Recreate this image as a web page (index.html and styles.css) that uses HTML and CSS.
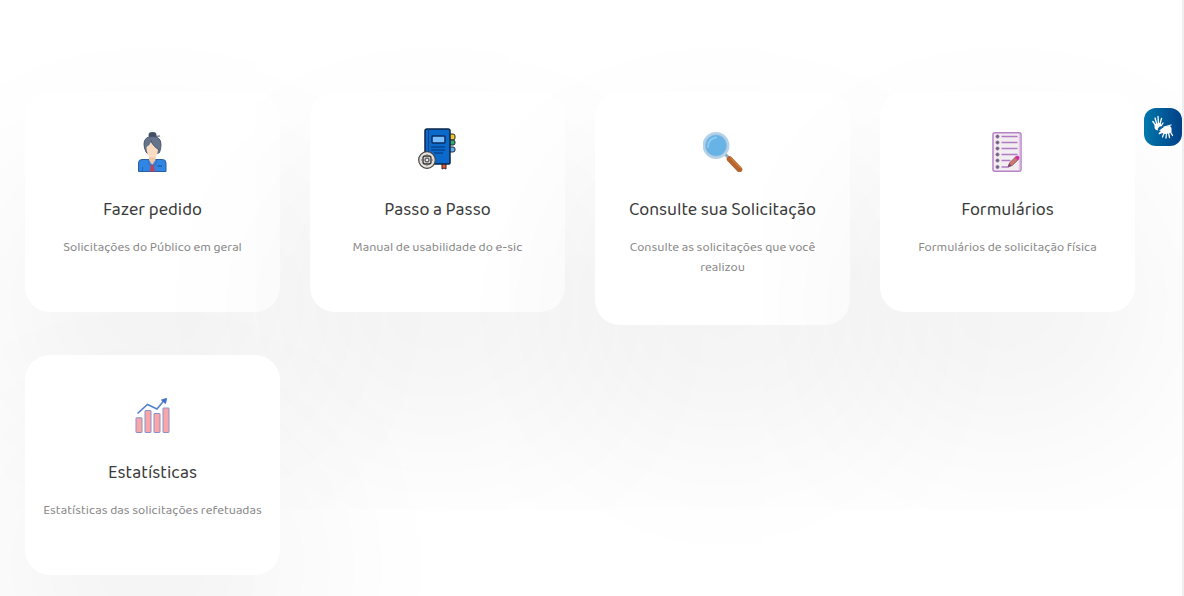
FILE: index.html
```
<!DOCTYPE html>
<html lang="pt-br">

<head>
    <meta charset="UTF-8">
    <meta name="viewport" content="width=device-width, initial-scale=1.0">
    <title>e-SIC</title>
    <link rel="stylesheet" href="styles.css">
</head>

<body>
    <main class="services">
        <a class="card" href="#">
            <svg class="icon" viewBox="0 0 40 40" aria-hidden="true">
                <path d="M5.500 39.500V31q0-3.500 3.500-3.500h20.500q3.500 0 3.500 3.500v8.500z" fill="#2f86e4" stroke="#2b5f9f" stroke-width="1" />
                <path d="M16 22h6.500v6l-3.300 5-3.200-5z" fill="#f0c8a8" />
                <path d="M18 32.500h2.500l1.500 7h-5.500z" fill="#b8455c" />
                <path d="M15 28l1 5 2 1M23.500 28l-1 5-2 1" fill="none" stroke="#3c6fb4" />
                <path d="M24.500 34h4.500" stroke="#1d4a86" stroke-width="1" />
                <path d="M9.500 39v-4" stroke="#1d5fb4" stroke-width=".8" />
                <ellipse cx="19.500" cy="3" rx="4" ry="3" fill="#414e63" />
                <path d="M20 4.500l7-.5" stroke="#414e63" stroke-width="1.200" />
                <path d="M13 20q-2-4-2-8 0-7.500 8.500-7.500t8.500 8q0 4-1.500 8l-2 1h-10z" fill="#66748b" stroke="#445066" stroke-width=".9" />
                <path d="M13.500 15q3.500-2 4.500-5 3 5 7 7.500-.5 8-5.800 8.500-5.700-1-5.700-11z" fill="#fbdcc2" />
                <path d="M18 8q1 6 8.500 10" fill="none" stroke="#445066" stroke-width=".8" />
            </svg>
            <h2 class="card-title">Fazer pedido</h2>
            <p class="card-text">Solicitações do Público em geral</p>
        </a>

        <a class="card" href="#">
            <svg class="icon icon-manual" viewBox="0 0 40 44" aria-hidden="true">
                <path d="M31 6h4q2 0 2 2v2q0 2-2 2h-4z" fill="#f5c52c" stroke="#262a33" />
                <path d="M31 12h4q2 0 2 2v1q0 2-2 2h-4z" fill="#2eac70" stroke="#262a33" />
                <path d="M31 19h4q2 0 2 2v1q0 2-2 2h-4z" fill="#61aef0" stroke="#262a33" />
                <path d="M24 35h4v6l-2-1-2 1z" fill="#e95d35" stroke="#3a2526" />
                <path d="M9 1h21q2 0 2 2v32q0 1-1 1H7V3q0-2 2-2z" fill="#0b69cc" stroke="#0a2446" stroke-width="1.500" />
                <path d="M10.500 1v34" stroke="#084389" />
                <rect x="14" y="8" width="13" height="7" rx="1" fill="#78bdff" stroke="#082c60" stroke-width="1.500" />
                <path d="M13 19h14M13 22h14M16 25h9" stroke="#07356f" stroke-width="1.200" />
                <circle cx="9" cy="32" r="8.300" fill="#e5dfd9" stroke="#444" stroke-width="1.200" />
                <rect x="5" y="28" width="8" height="8" rx="2" fill="#ccc" stroke="#353535" stroke-width="1.300" />
                <path d="M9 26v3M9 35v3M3 32h3M12 32h3" stroke="#666" />
                <circle cx="9" cy="32" r="2" fill="#eee" stroke="#333" />
            </svg>
            <h2 class="card-title">Passo a Passo</h2>
            <p class="card-text">Manual de usabilidade do e-sic</p>
        </a>

        <a class="card" href="#">
            <svg class="icon" viewBox="0 0 40 40" aria-hidden="true">
                <path d="M22 22l5 5" stroke="#8eabc0" stroke-width="3" />
                <path d="M26.500 27l10 10.500" stroke="#b5652e" stroke-width="5.600" stroke-linecap="round" />
                <path d="M27.500 26l10 10" stroke="#cd7b3c" stroke-width="1.200" />
                <circle cx="13" cy="13.500" r="12" fill="#68b3e6" stroke="#b5d3e8" stroke-width="3" />
                <circle cx="13" cy="13.500" r="10.700" fill="none" stroke="#86b4d6" stroke-width=".6" />
                <path d="M5 15q0-8 8-9.500" fill="none" stroke="#8ccaf1" stroke-width="2" stroke-linecap="round" />
            </svg>
            <h2 class="card-title">Consulte sua Solicitação</h2>
            <p class="card-text">Consulte as solicitações que você realizou</p>
        </a>

        <a class="card" href="#">
            <svg class="icon" viewBox="0 0 40 40" aria-hidden="true">
                <rect x="5" y=".8" width="28" height="38.400" rx="2" fill="#f2edf1" stroke="#b681c9" stroke-width="1.500" />
                <path d="M31.500 2v36" stroke="#dfc5e6" stroke-width="1.500" />
                <path d="M13.500 4.500h16M13.500 10.500h16M13.500 16.500h16M13.500 22.500h16M13.500 28.500h9M13.500 35h7" stroke="#b07bc4" stroke-width="1.400" />
                <g fill="#6c6572" stroke="#a577b4" stroke-width=".6">
                    <circle cx="9.500" cy="4.500" r="1.700" />
                    <circle cx="9.500" cy="10.500" r="1.700" />
                    <circle cx="9.500" cy="16.500" r="1.700" />
                    <circle cx="9.500" cy="22.500" r="1.700" />
                    <circle cx="9.500" cy="28.500" r="1.700" />
                    <circle cx="9.500" cy="35" r="1.700" />
                </g>
                <path d="M20 35l1.500-4 6.500-6.500 2.700 2.700-6.500 6.300z" fill="#cf7768" stroke="#7e4b67" stroke-width=".8" />
                <path d="M27 25.500l1.500-1.500q1.500-.8 2.500.5t0 2.300l-1.500 1.400z" fill="#d42ca2" />
                <path d="M20 35l1.300-3.500 2 2z" fill="#803c70" />
            </svg>
            <h2 class="card-title">Formulários</h2>
            <p class="card-text">Formulários de solicitação física</p>
        </a>

        <a class="card" href="#">
            <svg class="icon" viewBox="0 0 40 40" aria-hidden="true">
                <g fill="#fba6a6" stroke="#8790cc" stroke-width="1">
                    <rect x="3" y="22.800" width="6" height="14.700" rx=".5" />
                    <rect x="12" y="15.500" width="6" height="22" rx=".5" />
                    <rect x="21" y="18.500" width="6" height="19" rx=".5" />
                    <rect x="30" y="13" width="6" height="24.500" rx=".5" />
                </g>
                <path d="M4.500 18.500l10-9 9.500 4.500 7-8.500" fill="none" stroke="#5580cd" stroke-width="1.600" />
                <path d="M33.500 3.500l-1 5-4-3.500z" fill="#416fc4" stroke="#416fc4" />
            </svg>
            <h2 class="card-title">Estatísticas</h2>
            <p class="card-text">Estatísticas das solicitações refetuadas</p>
        </a>
    </main>

    <button class="libras" type="button" aria-label="Libras">
        <svg class="libras-icon" viewBox="0 0 24 24" aria-hidden="true">
            <g fill="none" stroke="#fff" stroke-linecap="round" stroke-width="1.300">
                <path d="M4.500 10L1.800 6.500M5.800 9L4 3M7.500 8.500L7 1.500M9 9L10.500 3.500M10 11l2-3" />
                <path d="M13 18l-1.500 4M15.500 18l-.5 5M17.500 17.500l1 5M19 16l2.500 4.500M13 12l7-2" />
            </g>
            <path d="M3.500 9.500q3-2 6-1.500l1 2.500-2.500 1.500q-2 1.500-1 3.500-3.500-.5-3.500-3.500z" fill="#fff" />
            <path d="M10 14l4-2.500 5-.5 1.500 2v4l-3 1.500-4 .5-2-1-3.500 1.500-.5-1.200 2.500-2.500-2 .2z" fill="#fff" />
        </svg>
    </button>
</body>

</html>
```
FILE: styles.css
```
* {
    box-sizing: border-box;
}

body {
    margin: 0;
    min-height: 100vh;
    background-color: #fff;
    border-right: 2px solid #f0f0f0;
    font-family: "Baloo 2", Ubuntu, "Noto Sans", sans-serif;
    overflow-x: hidden;
}

.services {
    display: grid;
    grid-template-columns: repeat(4, 1fr);
    align-items: start;
    gap: 30px;
    padding: 92px 47px 21px 25px;
}

.card {
    position: relative;
    display: flex;
    flex-direction: column;
    align-items: center;
    min-height: 220px;
    padding: 40px 15px 47px;
    border-radius: 25px;
    background-color: #fff;
    box-shadow: 0 100px 200px rgba(0, 0, 0, 0.07);
    color: #3a3a3a;
    text-align: center;
    text-decoration: none;
}

.icon {
    width: 40px;
    height: 40px;
}

.icon-manual {
    height: 44px;
    margin: -4px 0 0;
}

.card-title {
    margin: 26px 0 16px;
    font-size: 18px;
    font-weight: 300;
    line-height: 24px;
}

.card-text {
    margin: 0;
    color: #888;
    font-size: 13px;
    line-height: 20px;
}

.libras {
    position: fixed;
    top: 108px;
    right: 2px;
    display: flex;
    align-items: center;
    justify-content: center;
    width: 38px;
    height: 38px;
    padding: 0;
    border: 0;
    border-radius: 12px;
    background: linear-gradient(90deg, #0078ab, #003f86);
    cursor: pointer;
}

.libras-icon {
    width: 24px;
    height: 24px;
}

@media (max-width: 900px) {
    .services {
        grid-template-columns: repeat(2, 1fr);
    }
}
```
